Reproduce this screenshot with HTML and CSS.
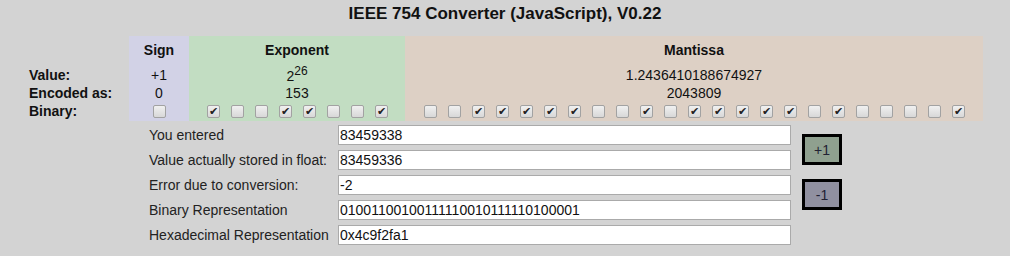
FILE: index.html
```html
<!DOCTYPE html>
<html lang="en">
<head>
    <meta charset="UTF-8">
    <meta name="viewport" content="width=device-width, initial-scale=1.0">
    <link rel="stylesheet" href="styles.css">
    <title>IEEE 754 Converter</title>
</head>
<body>
    <h1>IEEE 754 Converter (JavaScript), V0.22</h1>

    <div id="bits">
        <div class="cell"></div>
        <div class="cell sign head">Sign</div>
        <div class="cell exponent head">Exponent</div>
        <div class="cell mantissa head">Mantissa</div>

        <div class="cell label value">Value:</div>
        <div class="cell sign value">+1</div>
        <div class="cell exponent pow">2<sup>26</sup></div>
        <div class="cell mantissa value">1.2436410188674927</div>

        <div class="cell label">Encoded as:</div>
        <div class="cell sign">0</div>
        <div class="cell exponent">153</div>
        <div class="cell mantissa">2043809</div>

        <div class="cell label">Binary:</div>
        <div class="cell sign boxes" id="signBits"></div>
        <div class="cell exponent boxes" id="expBits"></div>
        <div class="cell mantissa boxes" id="manBits"></div>
    </div>

    <div id="panel">
        <div id="fields">
            <label for="entered">You entered</label>
            <input type="text" id="entered" value="83459338">

            <label for="stored">Value actually stored in float:</label>
            <input type="text" id="stored" value="83459336">

            <label for="error">Error due to conversion:</label>
            <input type="text" id="error" value="-2">

            <label for="binary">Binary Representation</label>
            <input type="text" id="binary" value="01001100100111110010111110100001">

            <label for="hex">Hexadecimal Representation</label>
            <input type="text" id="hex" value="0x4c9f2fa1">
        </div>
        <div id="buttons">
            <button id="plus">+1</button>
            <button id="minus">-1</button>
        </div>
    </div>

    <script>
        // fill the checkbox rows from the binary string
        const bits = document.getElementById('binary').value;

        function addBoxes(id, str) {
            const box = document.getElementById(id);
            for (const b of str) {
                const cb = document.createElement('input');
                cb.type = 'checkbox';
                cb.checked = b === '1';
                box.appendChild(cb);
            }
        }

        addBoxes('signBits', bits.slice(0, 1));
        addBoxes('expBits', bits.slice(1, 9));
        addBoxes('manBits', bits.slice(9));
    </script>
</body>
</html>
```

FILE: styles.css
```css
body {
    font-family: "Liberation Sans", Arial, sans-serif;
    font-size: 14px;
    margin: 0;
    padding: 0;
    background-color: #d3d3d3;
    color: #111;
}

h1 {
    font-size: 17px;
    line-height: 20px;
    text-align: center;
    margin: 4px 0 12px;
    color: #111;
}

#bits {
    display: grid;
    grid-template-columns: 102px 60px 216px 578px;
    grid-template-rows: 29px 19px 18px 19px;
    width: 956px;
    margin: 0 auto;
}

.cell {
    text-align: center;
    line-height: 18px;
}

.head {
    font-weight: bold;
    padding-top: 5px;
}

.value {
    padding-top: 1px;
}

.label {
    text-align: left;
    font-weight: bold;
    padding-left: 2px;
}

.sign {
    background-color: #d2d2e6;
}

.exponent {
    background-color: #c2ddc2;
}

.mantissa {
    background-color: #ddd0c5;
}

.pow {
    padding-top: 3px;
    line-height: 17px;
}

.pow sup {
    font-size: 12px;
    line-height: 0;
    vertical-align: 6px;
}

.boxes {
    display: flex;
    justify-content: center;
    align-items: center;
    gap: 11px;
    padding-bottom: 1px;
}

.boxes input {
    appearance: none;
    -webkit-appearance: none;
    width: 13px;
    height: 13px;
    margin: 0;
    border: 1px solid #a2a2a2;
    border-radius: 2px;
    background: linear-gradient(#f0f0f0, #d8d8d8);
    position: relative;
}

.boxes input:checked::before {
    content: "\2714";
    position: absolute;
    left: 1px;
    top: -1px;
    font-size: 11px;
    line-height: 13px;
    color: #222;
}

#panel {
    display: flex;
    align-items: flex-start;
    margin: 4px 0 0 147px;
}

#fields {
    display: grid;
    grid-template-columns: 191px 453px;
    row-gap: 5px;
    align-items: center;
}

#fields label {
    padding-left: 2px;
    color: #222;
}

#fields input {
    box-sizing: border-box;
    height: 20px;
    width: 453px;
    margin: 0;
    padding: 0 1px;
    font-family: inherit;
    font-size: 14px;
    color: #111;
    background-color: #fff;
    border: 1px solid #aaa;
}

#buttons {
    display: flex;
    flex-direction: column;
    gap: 14px;
    margin: 9px 0 0 11px;
}

#buttons button {
    box-sizing: border-box;
    width: 40px;
    height: 31px;
    padding: 0;
    border: 3px solid #000;
    font-family: inherit;
    font-size: 14px;
    color: #223;
}

#plus {
    background-color: #8fa08f;
}

#minus {
    background-color: #9090a0;
}
```
